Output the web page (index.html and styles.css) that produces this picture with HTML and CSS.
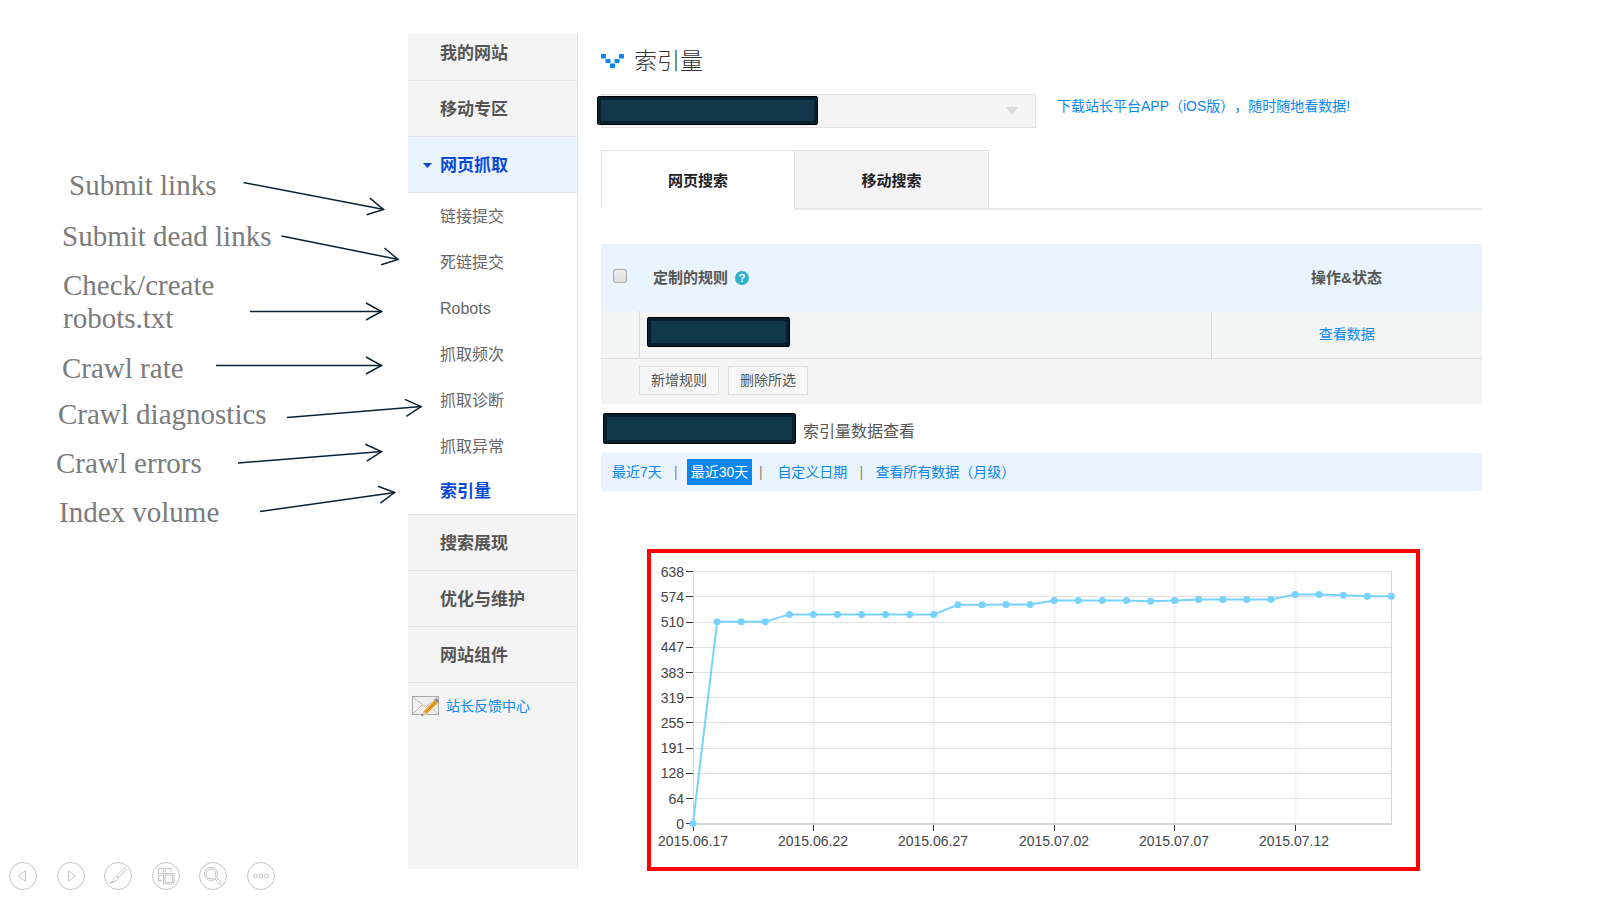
FILE: index.html
```html
<!DOCTYPE html>
<html lang="zh-CN">
<head>
<meta charset="utf-8">
<title>索引量</title>
<link rel="stylesheet" href="styles.css">
</head>
<body>
<div class="slide">
  <div class="notes">
    <svg class="notes-canvas" width="408" height="560" viewBox="0 0 408 560" role="img" aria-label="Menu translations">
      <defs>
        <marker id="arrow" markerUnits="userSpaceOnUse" markerWidth="20" markerHeight="20" refX="16" refY="10" orient="auto" overflow="visible">
          <path d="M0 1.500L15.500 10L0 18.500" fill="none" stroke="#0b2233" stroke-width="1.500"/>
        </marker>
      </defs>
      <g class="note-text">
        <text x="69" y="195">Submit links</text>
        <text x="62" y="246">Submit dead links</text>
        <text x="63" y="295">Check/create</text>
        <text x="63" y="328">robots.txt</text>
        <text x="62" y="378">Crawl rate</text>
        <text x="58" y="424">Crawl diagnostics</text>
        <text x="56" y="473">Crawl errors</text>
        <text x="59" y="522">Index volume</text>
      </g>
      <g class="note-arrow">
        <path d="M243.500 182.500L384 209.500"/>
        <path d="M281.500 236L398.500 259.500"/>
        <path d="M250 311.500H382"/>
        <path d="M216 365.500H382"/>
        <path d="M287 417.500L421.500 406.500"/>
        <path d="M238 463L382 451.500"/>
        <path d="M260 511.500L395 492.500"/>
      </g>
    </svg>
    <div class="controls">
      <button type="button" aria-label="Previous"><svg width="28" height="28" viewBox="0 0 28 28"><circle cx="14" cy="14" r="13.500"/><path d="M16.500 8.500V19.500L9.500 14Z"/></svg></button>
      <button type="button" aria-label="Next"><svg width="28" height="28" viewBox="0 0 28 28"><circle cx="14" cy="14" r="13.500"/><path d="M11.500 8.500V19.500L18.500 14Z"/></svg></button>
      <button type="button" aria-label="Pen"><svg width="28" height="28" viewBox="0 0 28 28"><circle cx="14" cy="14" r="13.500"/><path d="M13 13.500L20.500 6Q22 5.500 22 7.500L15 15.500ZM12.500 14L14.500 16L12 19L8.500 20L9.500 17ZM6 21.500Q5.500 19.500 8.500 19.500Q9 21 6 21.500Z"/></svg></button>
      <button type="button" aria-label="All slides"><svg width="28" height="28" viewBox="0 0 28 28"><circle cx="14" cy="14" r="13.500"/><path d="M6.500 6.500H12V11.500H6.500ZM13.500 10V6.500H19V10M10 13.500H6.500V18.500H10"/><path d="M11.500 11.500H22V22H11.500ZM13 13H20.500V20.500H13Z"/></svg></button>
      <button type="button" aria-label="Zoom"><svg width="28" height="28" viewBox="0 0 28 28"><circle cx="14" cy="14" r="13.500"/><circle cx="12" cy="12" r="6.500"/><circle cx="12" cy="12" r="4.800"/><path d="M16 17L17.500 15.500L22 20V22H20.500Z"/></svg></button>
      <button type="button" aria-label="More"><svg width="28" height="28" viewBox="0 0 28 28"><circle cx="14" cy="14" r="13.500"/><circle cx="8.500" cy="14" r="2"/><circle cx="14" cy="14" r="2"/><circle cx="19.500" cy="14" r="2"/></svg></button>
    </div>
  </div>

  <nav class="sidebar">
    <a class="group group-first" href="#">我的网站</a>
    <a class="group" href="#">移动专区</a>
    <a class="group group-open" href="#"><svg class="caret" width="9" height="5" viewBox="0 0 9 5"><path d="M0 0H9L4.500 5Z" fill="#0a48d6"/></svg>网页抓取</a>
    <div class="subs">
      <a href="#">链接提交</a>
      <a href="#">死链提交</a>
      <a href="#">Robots</a>
      <a href="#">抓取频次</a>
      <a href="#">抓取诊断</a>
      <a href="#">抓取异常</a>
      <a class="current" href="#">索引量</a>
    </div>
    <a class="group" href="#">搜索展现</a>
    <a class="group" href="#">优化与维护</a>
    <a class="group" href="#">网站组件</a>
    <a class="feedback" href="#">
      <svg width="28" height="22" viewBox="0 0 28 22">
        <rect x=".5" y="1.500" width="26" height="18" fill="#f0f0f0" stroke="#a9a9a9"/>
        <path d="M1 2L13.500 12L26 2M1 19L10 10M26 19L17 10" fill="none" stroke="#b9b9b9"/>
        <path d="M11.500 16L22 5L26 8.500L15 19L10 20.500Z" fill="#f0a030" stroke="#fff" stroke-width=".600"/>
        <path d="M13.500 17.500L24 7" stroke="#c97a14" fill="none"/>
        <path d="M22 5L23.500 3.500Q25 3 27 5.500L26 8.500Z" fill="#8c8c8c"/>
        <path d="M11.500 16L15 19L9.500 21Z" fill="#ddc9a6"/>
        <path d="M9.500 21L10 19L11.500 20.300Z" fill="#333"/>
      </svg>站长反馈中心</a>
  </nav>

  <main class="main">
    <h1 class="title">
      <svg width="23" height="14" viewBox="0 0 23 14" fill="#0a86f0"><path d="M0 0H5V4.500H0ZM4.500 5H9.500V9H4.500ZM9 9.500H14V14H9ZM13.500 5H18.500V9H13.500ZM18 0H23V4.500H18Z"/></svg>索引量</h1>

    <div class="picker-row">
      <div class="picker">
        <select aria-label="网站"><option></option></select>
        <svg class="picker-arrow" width="12" height="8" viewBox="0 0 12 8"><path d="M0 0H12L6 8Z" fill="#dadada"/></svg>
        <span class="mask mask-site"></span>
      </div>
      <a class="app-link" href="#">下载站长平台APP（iOS版），随时随地看数据!</a>
    </div>

    <div class="tabs" role="tablist">
      <button class="tab tab-active" type="button" role="tab" aria-selected="true">网页搜索</button>
      <button class="tab" type="button" role="tab" aria-selected="false">移动搜索</button>
    </div>

    <table class="rules">
      <thead>
        <tr>
          <th class="col-check"><input type="checkbox" aria-label="全选"></th>
          <th class="col-rule"><span class="rule-head">定制的规则
            <svg width="14" height="14" viewBox="0 0 14 14"><circle cx="7" cy="7" r="7" fill="#2fb1d3"/><path d="M4.800 5.600Q4.800 3.500 7 3.500T9.200 5.300Q9.200 6.300 8 7Q7 7.500 7 8.600" fill="none" stroke="#fff" stroke-width="1.600"/><rect x="6.200" y="9.500" width="1.700" height="1.600" fill="#fff"/></svg></span></th>
          <th class="col-state">操作&amp;状态</th>
        </tr>
      </thead>
      <tbody>
        <tr>
          <td></td>
          <td class="cell-rule"><span class="mask mask-rule"></span></td>
          <td class="cell-state"><a href="#">查看数据</a></td>
        </tr>
      </tbody>
      <tfoot>
        <tr>
          <td></td>
          <td colspan="2"><div class="actions"><button type="button">新增规则</button><button type="button">删除所选</button></div></td>
        </tr>
      </tfoot>
    </table>

    <h2 class="caption"><span class="mask mask-caption"></span>索引量数据查看</h2>

    <div class="ranges">
      <a href="#">最近7天</a><span class="bar">|</span><a class="range-on" href="#">最近30天</a><span class="bar bar-after">|</span><a href="#">自定义日期</a><span class="bar">|</span><a href="#">查看所有数据（月级）</a>
    </div>

    <div class="chart">
      <svg viewBox="0 0 765 314" role="img" aria-label="索引量趋势">
        <defs><marker id="dot" markerUnits="userSpaceOnUse" markerWidth="8" markerHeight="8" refX="4" refY="4"><circle cx="4" cy="4" r="3.500" fill="#78d2ff"/></marker></defs>
        <path d="M162.500 18V270M282.500 18V270M403.500 18V270M523.500 18V270M644.500 18V270" stroke="#f3f3f3" stroke-width="2"/>
        <path d="M42 18.500H741M42 43.500H741M42 69.500H741M42 94.500H741M42 119.500H741M42 144.500H741M42 169.500H741M42 195.500H741M42 220.500H741M42 245.500H741" stroke="#e1e1e1"/>
        <path d="M42.500 18V270M740.500 18V270" stroke="#d6d6d6"/>
        <path d="M42 271H741" stroke="#d6d6d6" stroke-width="2"/>
        <path d="M35 18.500H42M35 43.500H42M35 69.500H42M35 94.500H42M35 119.500H42M35 144.500H42M35 169.500H42M35 195.500H42M35 220.500H42M35 245.500H42M35 270.500H42M42.500 272V278M162.500 272V278M282.500 272V278M403.500 272V278M523.500 272V278M644.500 272V278" stroke="#333"/>
        <g class="axis axis-y">
          <text x="33" y="24">638</text><text x="33" y="49">574</text><text x="33" y="74">510</text><text x="33" y="99">447</text><text x="33" y="125">383</text><text x="33" y="150">319</text><text x="33" y="175">255</text><text x="33" y="200">191</text><text x="33" y="225">128</text><text x="33" y="251">64</text><text x="33" y="276">0</text>
        </g>
        <g class="axis axis-x">
          <text x="42" y="293">2015.06.17</text><text x="162" y="293">2015.06.22</text><text x="282" y="293">2015.06.27</text><text x="403" y="293">2015.07.02</text><text x="523" y="293">2015.07.07</text><text x="643" y="293">2015.07.12</text>
        </g>
        <polyline class="series" points="42,270.500 66.100,68.800 90.200,68.800 114.200,68.800 138.300,61.400 162.400,61.400 186.500,61.400 210.600,61.400 234.600,61.400 258.700,61.400 282.800,61.400 306.900,51.800 331,51.800 355,51.500 379.100,51.500 403.200,47.500 427.300,47.500 451.400,47.500 475.400,47.500 499.500,48.300 523.600,47.500 547.700,46.500 571.800,46.500 595.800,46.500 619.900,46.500 644,41.500 668.100,41.500 692.200,42.300 716.200,43.300 740.300,43.300"/>
      </svg>
    </div>
  </main>
</div>
</body>
</html>
```

FILE: styles.css
```css
* { box-sizing: border-box; }

body {
  margin: 0;
  background: #fff;
  color: #555;
  font-family: "Liberation Sans", "Noto Sans CJK SC", sans-serif;
  font-size: 14px;
  line-height: 20px;
  text-spacing-trim: space-all;
}

a { color: #0a86f0; text-decoration: none; }

button { font-family: inherit; cursor: pointer; }

svg { display: block; flex: none; }

.slide {
  display: flex;
  min-height: 100vh;
}

/* Annotations */
.notes {
  flex: none;
  width: 408px;
  display: flex;
  flex-direction: column;
  justify-content: space-between;
  padding-bottom: 10px;
}

.notes-canvas {
  position: relative;
  z-index: 1;
  overflow: visible;
  pointer-events: none;
}

.note-text {
  fill: #7b7b7b;
  font-family: Georgia, "Liberation Serif", serif;
  font-size: 29px;
}

.note-arrow path {
  fill: none;
  stroke: #0b2233;
  stroke-width: 1.500px;
  marker-end: url(#arrow);
}

.controls {
  display: flex;
  justify-content: space-between;
  width: 266px;
  margin-left: 9px;
}

.controls button {
  padding: 0;
  border: 0;
  background: none;
}

.controls svg {
  fill: none;
  stroke: #c4c4c4;
}

/* Sidebar */
.sidebar {
  flex: none;
  width: 170px;
  margin: 34px 0 31px;
  background: #f4f4f4;
  border-right: 1px solid #e3e3e3;
}

.group {
  position: relative;
  display: flex;
  align-items: center;
  height: 56px;
  padding: 2px 0 0 32px;
  border-bottom: 1px solid #e3e3e3;
  color: #555;
  font-size: 17px;
  font-weight: bold;
}

.group-first {
  height: 47px;
  padding: 0 0 6px 32px;
}

.group-open {
  background: #e9f4ff;
  color: #0a48d6;
}

.caret {
  position: absolute;
  left: 15px;
  top: 26px;
}

.subs {
  background: #fff;
  border-bottom: 1px solid #e3e3e3;
}

.subs a {
  display: flex;
  align-items: center;
  height: 46px;
  padding: 2px 0 0 32px;
  color: #666;
  font-size: 16px;
}

.subs .current {
  height: 45px;
  padding-top: 0;
  color: #0a48d6;
  font-size: 17px;
  font-weight: bold;
}

.feedback {
  display: flex;
  align-items: center;
  gap: 6px;
  height: 46px;
  padding-left: 4px;
}

/* Main column */
.main {
  flex: 1;
  min-width: 0;
  padding: 44px 118px 28px 23px;
}

.title {
  display: flex;
  align-items: center;
  gap: 10px;
  margin: 0 0 16px;
  color: #333;
  font-size: 23px;
  font-weight: 300;
  line-height: 34px;
}

.picker-row {
  display: flex;
  gap: 21px;
}

.picker {
  position: relative;
  flex: 0 1 435px;
}

.picker select {
  display: block;
  width: 100%;
  height: 34px;
  border: 1px solid #e1e1e1;
  border-radius: 0;
  background: #f4f4f4;
  appearance: none;
}

.picker-arrow {
  position: absolute;
  right: 18px;
  top: 13px;
}

.app-link { padding-top: 2px; }

.mask {
  display: block;
  flex: none;
  background: #12374b;
  border: 1px solid #000;
  border-radius: 2px;
  box-shadow: inset 0 0 0 3px #06202e;
}

.mask-site {
  position: absolute;
  left: -4px;
  top: 2px;
  width: 221px;
  height: 29px;
}

.mask-rule {
  width: 143px;
  height: 30px;
}

.mask-caption {
  width: 193px;
  height: 31px;
}

.tabs {
  display: flex;
  margin: 22px 0 34px;
  box-shadow: inset 0 -2px #eaeaea;
}

.tab {
  width: 194px;
  height: 60px;
  padding-bottom: 2px;
  border: 1px solid #e1e1e1;
  border-bottom: 2px solid #e6e6e6;
  border-left: 0;
  background: #f4f4f4;
  color: #222;
  font-size: 15px;
  font-weight: bold;
}

.tab-active {
  border-left: 1px solid #e1e1e1;
  border-bottom-color: #fff;
  background: #fff;
}

.rules {
  width: 100%;
  border-collapse: collapse;
  table-layout: fixed;
  background: #f4f4f4;
}

.rules th,
.rules td { padding: 0; }

.rules th {
  height: 67px;
  background: #e9f4ff;
  font-size: 15px;
}

.col-check { width: 38px; }

.col-state { width: 271px; }

.col-check input {
  display: block;
  appearance: none;
  width: 14px;
  height: 14px;
  margin: 0 0 3px 12px;
  border: 1px solid #aaa;
  border-radius: 3px;
  background: linear-gradient(#eee, #dedede);
}

.rule-head {
  display: flex;
  align-items: center;
  gap: 7px;
  padding-left: 14px;
}

.rules tbody td {
  height: 47px;
  background: #f3f4f4;
  border-bottom: 1px solid #dcdcdc;
}

.rules .cell-rule {
  padding: 0 0 5px 7px;
  border-left: 1px solid #dcdcdc;
  border-right: 1px solid #dcdcdc;
}

.cell-state { text-align: center; }

.rules tfoot td {
  height: 46px;
  padding-bottom: 2px;
}

.actions {
  display: flex;
  gap: 9px;
}

.actions button {
  width: 80px;
  height: 29px;
  padding: 0 0 2px;
  border: 1px solid #dedede;
  background: #f6f6f6;
  color: #555;
  font-size: 14px;
}

.caption {
  display: flex;
  align-items: flex-end;
  gap: 7px;
  margin: 9px 0;
  padding-left: 2px;
  color: #555;
  font-size: 16px;
  font-weight: normal;
  line-height: 24px;
}

.ranges {
  display: flex;
  align-items: center;
  height: 38px;
  padding-left: 11px;
  background: #e9f4ff;
}

.bar {
  width: 28px;
  color: #8a8672;
  text-align: center;
}

.ranges .range-on {
  padding: 3px 4px;
  margin-left: -3px;
  background: #0a86f0;
  color: #fff;
}

.bar-after {
  width: 25px;
  padding-right: 8px;
}

.chart {
  margin: 58px 62px 0 46px;
  border: 4px solid #f00;
}

.chart svg {
  width: 100%;
  height: auto;
}

.axis {
  fill: #444;
  font-size: 14px;
}

.axis-y { text-anchor: end; }

.axis-x { text-anchor: middle; }

.series {
  fill: none;
  stroke: #78d2ff;
  stroke-width: 2px;
  marker-start: url(#dot);
  marker-mid: url(#dot);
  marker-end: url(#dot);
}
```
